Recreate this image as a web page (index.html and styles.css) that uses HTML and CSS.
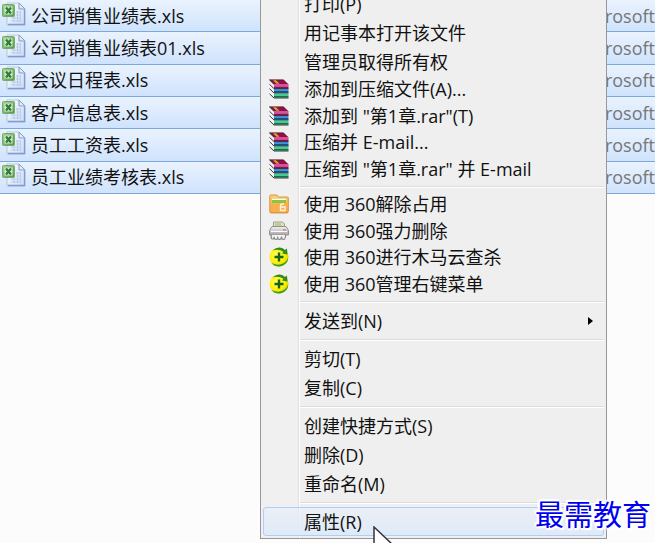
FILE: index.html
```html
<!DOCTYPE html>
<html lang="zh-CN">
<head>
  <meta charset="UTF-8">
  <title>右键菜单</title>
  <meta name="viewport" content="width=device-width, initial-scale=1.0">
  <link rel="stylesheet" href="styles.css">
</head>
<body>

  <!-- 图标 -->
  <svg class="defs" width="0" height="0">
    <defs>
      <linearGradient id="gPage" x1="0" y1="0" x2="1" y2="1">
        <stop offset="0" stop-color="#ffffff"/><stop offset="1" stop-color="#c9daf3"/>
      </linearGradient>
      <linearGradient id="gGreen" x1="0" y1="0" x2="1" y2="1">
        <stop offset="0" stop-color="#a9d49a"/><stop offset="1" stop-color="#4f9a4b"/>
      </linearGradient>
      <linearGradient id="gFolder" x1="0" y1="0" x2="0" y2="1">
        <stop offset="0" stop-color="#ffd27a"/><stop offset="1" stop-color="#f0963c"/>
      </linearGradient>
      <linearGradient id="gGrey" x1="0" y1="0" x2="0" y2="1">
        <stop offset="0" stop-color="#f2f2f2"/><stop offset="1" stop-color="#a4a4a4"/>
      </linearGradient>
      <radialGradient id="gBall" cx="0.4" cy="0.4" r="0.6">
        <stop offset="0" stop-color="#ffff66"/><stop offset="0.7" stop-color="#ffee00"/><stop offset="1" stop-color="#d8d800"/>
      </radialGradient>
      <symbol id="xls" viewBox="0 0 24 24">
        <path d="M5 1h12l6 6v16H5z" fill="url(#gPage)" stroke="#b4c6e2"/>
        <path d="M22.500 7.500V22.500H6" fill="none" stroke="#7f9ccb" stroke-width="1.300"/>
        <path d="M17 1v6h6z" fill="#dfeaf9" stroke="#7f9bcb"/>
        <path d="M14 10h5M14 13h5M9 16h10M9 19h10M12 15v5M15.500 9v11M18.500 9v11" stroke="#b8cbe8" fill="none"/>
        <rect x="0.500" y="2.500" width="12" height="12" rx="1" fill="url(#gGreen)" stroke="#74aa6c"/>
        <rect x="2.500" y="4.500" width="8" height="8" fill="#d4e9cc"/>
        <path d="M4 5.500l5 6M9 5.500l-5 6" stroke="#2d7d32" stroke-width="2.200"/>
      </symbol>
      <symbol id="rar" viewBox="0 0 20 20">
        <path d="M0.500 0.800h14l4.500 4.500H5z" fill="#8c1445" stroke="#5a0a28" stroke-width="0.600"/>
        <path d="M4 1.200h3l3.500 3.500H7.500z" fill="#c8b020"/>
        <path d="M5 5h14.500v2.500H5z" fill="#e848a4"/><path d="M5 7.500h14.500v2H5z" fill="#8a1050"/>
        <path d="M5 10h14.500v2H5z" fill="#3c94e0"/><path d="M5 12h14.500v1.800H5z" fill="#14508c"/>
        <path d="M5 14.600h14.500v2.200H5z" fill="#34d494"/><path d="M5 16.800h14.500v1.800H5z" fill="#0b7a48"/>
        <path d="M0.500 1L5 5.500V9L0.500 5zM0.500 6L5 10v3.500L0.500 9.500zM0.500 11L5 15v4l-4.500-4z" fill="#f4f4f4"/>
        <path d="M0.500 1L5 5.300M0.500 5.300L5 9.600h14.500M0.500 9.700L5 14h14.500M0.500 14.800L5 19h14.500" fill="none" stroke="#222222" stroke-width="0.900"/>
      </symbol>
      <symbol id="unlock" viewBox="0 0 20 20">
        <path d="M0.800 2q0-1 1-1h6l1.500 2h9q1 0 1 1v13.500q0 1.500-1.500 1.500H2.300Q0.800 19 0.800 17.500z" fill="url(#gFolder)" stroke="#dc9440"/>
        <path d="M3 4.500h14V9H3z" fill="#8cc63f"/><path d="M3 4.500h14v1.500H3z" fill="#f5ffe0"/>
        <path d="M1.500 10q6 2 8-1h9v8q0 1-1 1h-15q-1 0-1-1z" fill="#f8ad4e"/>
        <path d="M11.500 13v-1.500q0-1.500 2-1.500h1.500M11.500 13h4.500v3.500h-4.500z" fill="none" stroke="#fff3d8" stroke-width="1.400"/>
      </symbol>
      <symbol id="shred" viewBox="0 0 20 20">
        <path d="M4.500 6V1h9l2 2v3z" fill="#dfe7c0" stroke="#9a9f90"/>
        <path d="M6 3h6M6 5h7" stroke="#9eb46c"/>
        <path d="M3 5.500h14l2.500 4V14H0.500V9.500z" fill="url(#gGrey)" stroke="#929292"/>
        <path d="M2 10.500h16" stroke="#ffffff"/><path d="M14 9h3" stroke="#d86060"/>
        <path d="M2.500 14q-1 4 1 4t1.500-2.500q0 3 2 3t1.500-3q0 3 2 3t2-3q0 3 2 3t2-4.500" fill="#f5f5f5" stroke="#888888" stroke-width="1.200"/>
      </symbol>
      <symbol id="safe" viewBox="0 0 20 20">
        <circle cx="10" cy="10" r="9.500" fill="url(#gBall)"/>
        <path d="M3.500 3.500Q10-2 16 3L18 1.500 18.500 7.500 13 6.500 14.500 4.800Q9.500 1.500 3.500 3.500z" fill="#2c8c28"/>
        <path d="M19.300 10Q19 18 11 19.500 5.500 20 2.500 16 9 19 14 16.500 18 14.500 19.300 10z" fill="#3f9c28"/>
        <path d="M10 5.500v9M5.500 10h9" stroke="#146414" stroke-width="2.400"/>
      </symbol>
    </defs>
  </svg>

  <!-- 文件列表 -->
  <div class="files">
    <div class="file"><svg class="file-icon"><use href="#xls"/></svg><span class="name">公司销售业绩表.xls</span><span class="type">Microsoft</span></div>
    <div class="file"><svg class="file-icon"><use href="#xls"/></svg><span class="name">公司销售业绩表01.xls</span><span class="type">Microsoft</span></div>
    <div class="file"><svg class="file-icon"><use href="#xls"/></svg><span class="name">会议日程表.xls</span><span class="type">Microsoft</span></div>
    <div class="file"><svg class="file-icon"><use href="#xls"/></svg><span class="name">客户信息表.xls</span><span class="type">Microsoft</span></div>
    <div class="file"><svg class="file-icon"><use href="#xls"/></svg><span class="name">员工工资表.xls</span><span class="type">Microsoft</span></div>
    <div class="file"><svg class="file-icon"><use href="#xls"/></svg><span class="name">员工业绩考核表.xls</span><span class="type">Microsoft</span></div>
  </div>

  <!-- 右键菜单 -->
  <div class="menu">
    <div class="group">
      <button class="item">打印(P)</button>
      <button class="item">用记事本打开该文件</button>
      <button class="item">管理员取得所有权</button>
    </div>
    <div class="group compact">
      <button class="item"><svg class="icon"><use href="#rar"/></svg>添加到压缩文件(A)...</button>
      <button class="item"><svg class="icon"><use href="#rar"/></svg>添加到 "第1章.rar"(T)</button>
      <button class="item"><svg class="icon"><use href="#rar"/></svg>压缩并 E-mail...</button>
      <button class="item"><svg class="icon"><use href="#rar"/></svg>压缩到 "第1章.rar" 并 E-mail</button>
    </div>
    <hr class="line">
    <div class="group compact">
      <button class="item"><svg class="icon"><use href="#unlock"/></svg>使用 360解除占用</button>
      <button class="item"><svg class="icon"><use href="#shred"/></svg>使用 360强力删除</button>
      <button class="item"><svg class="icon"><use href="#safe"/></svg>使用 360进行木马云查杀</button>
      <button class="item"><svg class="icon"><use href="#safe"/></svg>使用 360管理右键菜单</button>
    </div>
    <hr class="line">
    <div class="group">
      <button class="item">发送到(N)<svg class="arrow" viewBox="0 0 5 8"><path d="M0 0l5 4-5 4z"/></svg></button>
    </div>
    <hr class="line">
    <div class="group">
      <button class="item">剪切(T)</button>
      <button class="item">复制(C)</button>
    </div>
    <hr class="line">
    <div class="group">
      <button class="item">创建快捷方式(S)</button>
      <button class="item">删除(D)</button>
      <button class="item">重命名(M)</button>
    </div>
    <hr class="line">
    <div class="group">
      <button class="item active">属性(R)</button>
    </div>
  </div>

  <svg class="cursor" viewBox="0 0 20 28"><path d="M1 1v24l6-5 4 8h4l-3-9h8z" fill="#ffffff" stroke="#333344" stroke-width="1.500"/></svg>

  <div class="watermark">最需教育</div>

</body>
</html>
```
FILE: styles.css
```css
* { box-sizing: border-box; margin: 0; padding: 0; }

body {
  position: relative;
  height: 100vh;
  overflow: hidden;
  background-color: #fcfcfc;
  border-right: 2px solid #fff;
  border-bottom: 2px solid #fff;
  font-family: 'Open Sans', 'Noto Sans CJK SC', sans-serif;
  font-size: 18px;
  line-height: 24px;
  color: #111;
}

.defs { position: absolute; }

/* 文件列表 */
.files {
  display: grid;
  grid-auto-rows: 1fr;
  height: 194px;
}

.file {
  display: flex;
  align-items: center;
  gap: 5px;
  padding-left: 2px;
  background: linear-gradient(#eaf3fe, #cfe3fd);
  border-bottom: 1px solid #7da8dc;
  white-space: nowrap;
}

.file-icon {
  width: 24px;
  height: 24px;
  margin-bottom: 4px;
}

.name { flex: 1; }

.type { color: #777; }

/* 菜单 */
.menu {
  position: absolute;
  left: 260px;
  bottom: 4px;
  width: 347px;
  padding: 2px;
  background: linear-gradient(90deg, #f0f0f0 37px, #dfdfdf 37px, #dfdfdf 38px, #fff 38px, #fff 39px, #efefef 39px);
  border: 1px solid #979797;
}

.group {
  display: grid;
  grid-auto-rows: 29px;
}

.compact {
  height: 106px;
  grid-auto-rows: 1fr;
}

.item {
  position: relative;
  display: flex;
  align-items: center;
  padding-left: 40px;
  border: 1px solid transparent;
  border-radius: 3px;
  background: none;
  font: inherit;
  color: inherit;
  text-align: left;
  white-space: nowrap;
}

.item.active {
  background: linear-gradient(rgba(232, 239, 249, 0.6), rgba(222, 233, 248, 0.9));
  border-color: #aecff7;
}

.icon {
  position: absolute;
  left: 5px;
  width: 20px;
  height: 20px;
}

.arrow {
  width: 5px;
  height: 8px;
  margin-left: auto;
  margin-right: 10px;
}

.line {
  height: 2px;
  margin: 4px 0 3px 37px;
  border: none;
  border-top: 1px solid #dcdcdc;
  background-color: #fff;
}

.cursor {
  position: absolute;
  left: 373px;
  top: 526px;
  width: 20px;
  height: 28px;
}

/* 水印 */
.watermark {
  position: absolute;
  right: 4px;
  bottom: 10px;
  font-family: KaiTi, 'Noto Sans CJK SC', sans-serif;
  font-size: 29px;
  line-height: 40px;
  color: #0000f0;
  text-shadow: -2px 0 1px #fff, 2px 0 1px #fff, 0 -2px 1px #fff, 0 2px 1px #fff, 2px 2px 1px #fff, -2px -2px 1px #fff;
}
```
